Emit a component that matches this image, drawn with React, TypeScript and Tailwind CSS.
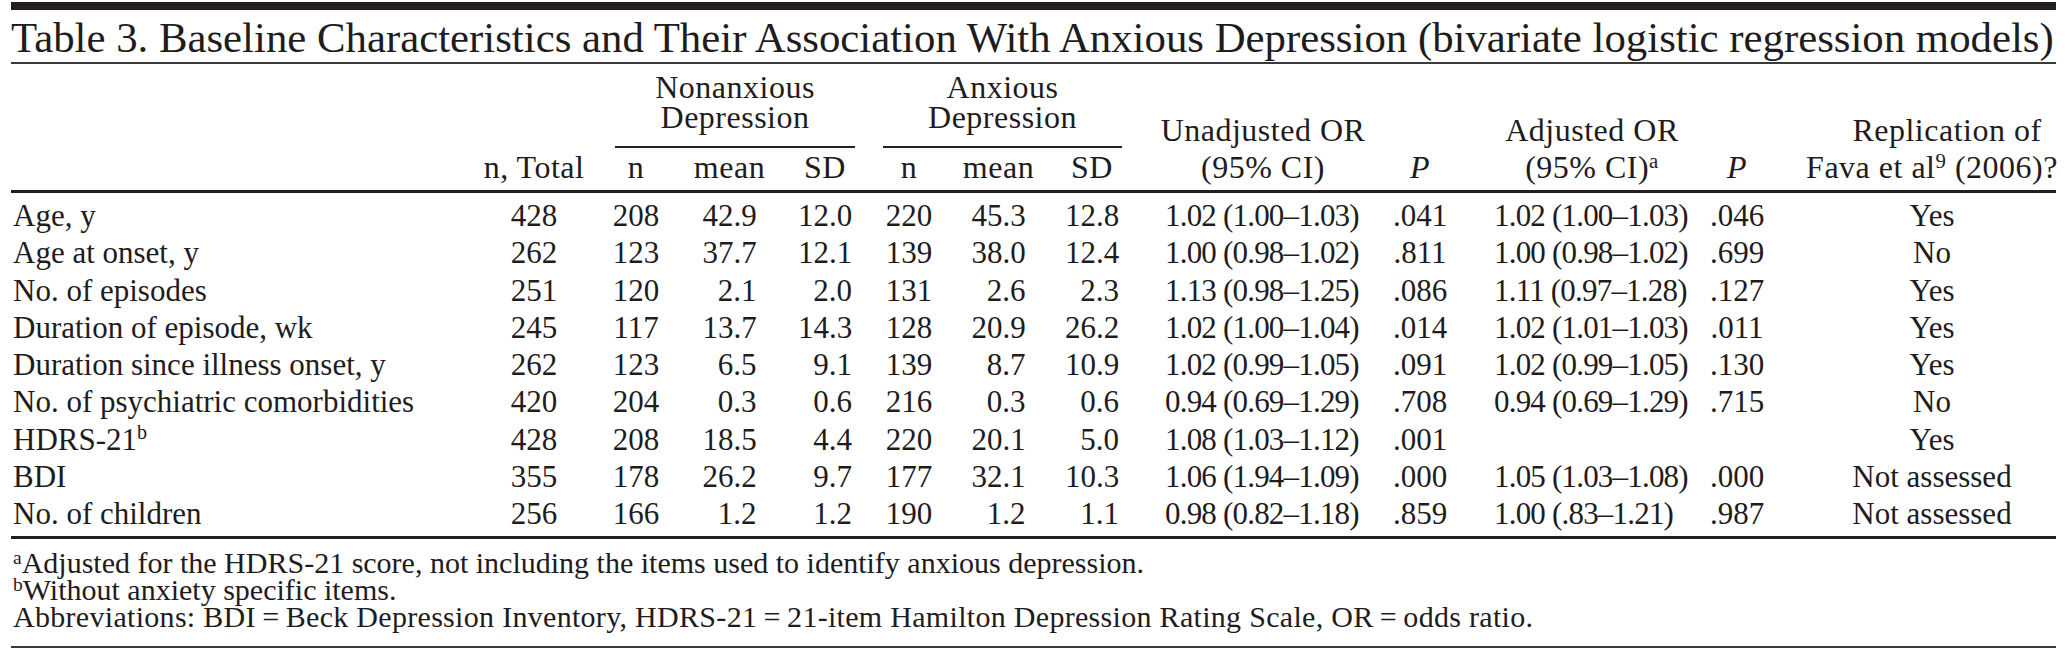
import React from "react";

const colCls = [
  "w-[472px] pl-[2px] justify-start",
  "w-[102px] justify-center",
  "w-[97px] pl-[5px] justify-center",
  "w-[95px] justify-center",
  "w-[89px] pl-[7px] justify-center",
  "w-[86px] justify-center",
  "w-[93px] justify-center",
  "w-[94px] justify-center",
  "w-[242px] pl-[6px] justify-center",
  "w-[78px] justify-center",
  "w-[241px] pl-[25px] justify-center",
  "w-[74px] justify-center",
  "w-[282px] pl-[34px] justify-center",
];

type Row = { label: React.ReactNode; v: string[] };

const rows: Row[] = [
  { label: "Age, y", v: ["428", "208", "42.9", "12.0", "220", "45.3", "12.8", "1.02 (1.00–1.03)", ".041", "1.02 (1.00–1.03)", ".046", "Yes"] },
  { label: "Age at onset, y", v: ["262", "123", "37.7", "12.1", "139", "38.0", "12.4", "1.00 (0.98–1.02)", ".811", "1.00 (0.98–1.02)", ".699", "No"] },
  { label: "No. of episodes", v: ["251", "120", "2.1", "2.0", "131", "2.6", "2.3", "1.13 (0.98–1.25)", ".086", "1.11 (0.97–1.28)", ".127", "Yes"] },
  { label: "Duration of episode, wk", v: ["245", "117", "13.7", "14.3", "128", "20.9", "26.2", "1.02 (1.00–1.04)", ".014", "1.02 (1.01–1.03)", ".011", "Yes"] },
  { label: "Duration since illness onset, y", v: ["262", "123", "6.5", "9.1", "139", "8.7", "10.9", "1.02 (0.99–1.05)", ".091", "1.02 (0.99–1.05)", ".130", "Yes"] },
  { label: "No. of psychiatric comorbidities", v: ["420", "204", "0.3", "0.6", "216", "0.3", "0.6", "0.94 (0.69–1.29)", ".708", "0.94 (0.69–1.29)", ".715", "No"] },
  {
    label: (
      <span>
        HDRS-21<sup className="text-[0.65em]">b</sup>
      </span>
    ),
    v: ["428", "208", "18.5", "4.4", "220", "20.1", "5.0", "1.08 (1.03–1.12)", ".001", "", "", "Yes"],
  },
  { label: "BDI", v: ["355", "178", "26.2", "9.7", "177", "32.1", "10.3", "1.06 (1.94–1.09)", ".000", "1.05 (1.03–1.08)", ".000", "Not assessed"] },
  { label: "No. of children", v: ["256", "166", "1.2", "1.2", "190", "1.2", "1.1", "0.98 (0.82–1.18)", ".859", "1.00 (.83–1.21)", ".987", "Not assessed"] },
];

function Cell({ i, value }: { i: number; value: string }) {
  let inner: React.ReactNode = value;
  if (i === 2 || i === 3 || i === 5 || i === 6) {
    inner = <span className="inline-block w-[54px] text-right">{value}</span>;
  } else if (i === 7 || i === 9) {
    inner = <span className="inline-block w-[196px] text-left tracking-[-0.8px]">{value}</span>;
  }
  return <div className={`flex shrink-0 whitespace-nowrap ${colCls[i + 1]}`}>{inner}</div>;
}

export default function App() {
  return (
    <div className="min-h-[664px] w-[2065px] bg-white text-[#1f1c1d] font-['Liberation_Serif','Times_New_Roman',serif]">
      <div className="ml-[11px] w-[2045px] pt-[2px]">
        <div className="h-[8px] bg-[#231f20]" />
        <div className="whitespace-nowrap border-b-2 border-[#3a3a3a] pt-[5px] pb-[1px] text-[42.8px] leading-[46px]">
          Table 3. Baseline Characteristics and Their Association With Anxious Depression (bivariate logistic regression models)
        </div>

        {/* Header */}
        <div className="flex h-[129px] items-end border-b-[3px] border-[#231f20] text-[32px] leading-[37px] tracking-[0.5px]">
          <div className={`flex shrink-0 pb-[4px] ${colCls[0]}`} />
          <div className={`flex shrink-0 whitespace-nowrap pb-[4px] ${colCls[1]}`}>n, Total</div>
          <div className="flex w-[281px] shrink-0 flex-col pb-[4px]">
            <div className="ml-[30px] mr-[11px] flex flex-col items-center border-b-2 border-[#231f20] pb-[14px] leading-[30px]">
              <span>Nonanxious</span>
              <span>Depression</span>
            </div>
            <div className="mt-[1px] flex">
              <div className={`flex shrink-0 ${colCls[2]}`}>n</div>
              <div className={`flex shrink-0 ${colCls[3]}`}>mean</div>
              <div className={`flex shrink-0 ${colCls[4]}`}>SD</div>
            </div>
          </div>
          <div className="flex w-[273px] shrink-0 flex-col pb-[4px]">
            <div className="ml-[17px] mr-[17px] flex flex-col items-center border-b-2 border-[#231f20] pb-[14px] leading-[30px]">
              <span>Anxious</span>
              <span>Depression</span>
            </div>
            <div className="mt-[1px] flex">
              <div className={`flex shrink-0 ${colCls[5]}`}>n</div>
              <div className={`flex shrink-0 ${colCls[6]}`}>mean</div>
              <div className={`flex shrink-0 ${colCls[7]}`}>SD</div>
            </div>
          </div>
          <div className={`flex shrink-0 flex-col items-center whitespace-nowrap pb-[4px] ${colCls[8]}`}>
            <span>Unadjusted OR</span>
            <span>(95% CI)</span>
          </div>
          <div className={`flex shrink-0 pb-[4px] italic ${colCls[9]}`}>P</div>
          <div className={`flex shrink-0 flex-col items-center whitespace-nowrap pb-[4px] ${colCls[10]}`}>
            <span>Adjusted OR</span>
            <span>
              (95% CI)<sup className="text-[0.65em]">a</sup>
            </span>
          </div>
          <div className={`flex shrink-0 pb-[4px] italic ${colCls[11]}`}>P</div>
          <div className={`flex shrink-0 flex-col items-center whitespace-nowrap pb-[4px] ${colCls[12]}`}>
            <span className="pl-[30px]">Replication of</span>
            <span>
              Fava et al<sup className="text-[0.65em]">9</sup> (2006)?
            </span>
          </div>
        </div>

        {/* Body */}
        <div className="border-b-[3px] border-[#231f20] pt-[4px] pb-[4px] text-[31px] leading-[37.25px]">
          {rows.map((r, ri) => (
            <div key={ri} className="flex">
              <div className={`flex shrink-0 whitespace-nowrap ${colCls[0]}`}>{r.label}</div>
              {r.v.map((val, i) => (
                <Cell key={i} i={i} value={val} />
              ))}
            </div>
          ))}
        </div>

        {/* Footnotes */}
        <div className="border-b-2 border-[#3a3a3a] pt-[10px] pb-[16px] pl-[2px] text-[30px] leading-[27px]">
          <div className="whitespace-nowrap">
            <sup className="text-[0.65em]">a</sup>Adjusted for the HDRS-21 score, not including the items used to identify anxious depression.
          </div>
          <div className="whitespace-nowrap">
            <sup className="text-[0.65em]">b</sup>Without anxiety specific items.
          </div>
          <div className="whitespace-nowrap tracking-[0.3px]">
            Abbreviations: BDI{"\u2009=\u2009"}Beck Depression Inventory, HDRS-21{"\u2009=\u2009"}21-item Hamilton Depression Rating Scale, OR{"\u2009=\u2009"}odds ratio.
          </div>
        </div>
      </div>
    </div>
  );
}
